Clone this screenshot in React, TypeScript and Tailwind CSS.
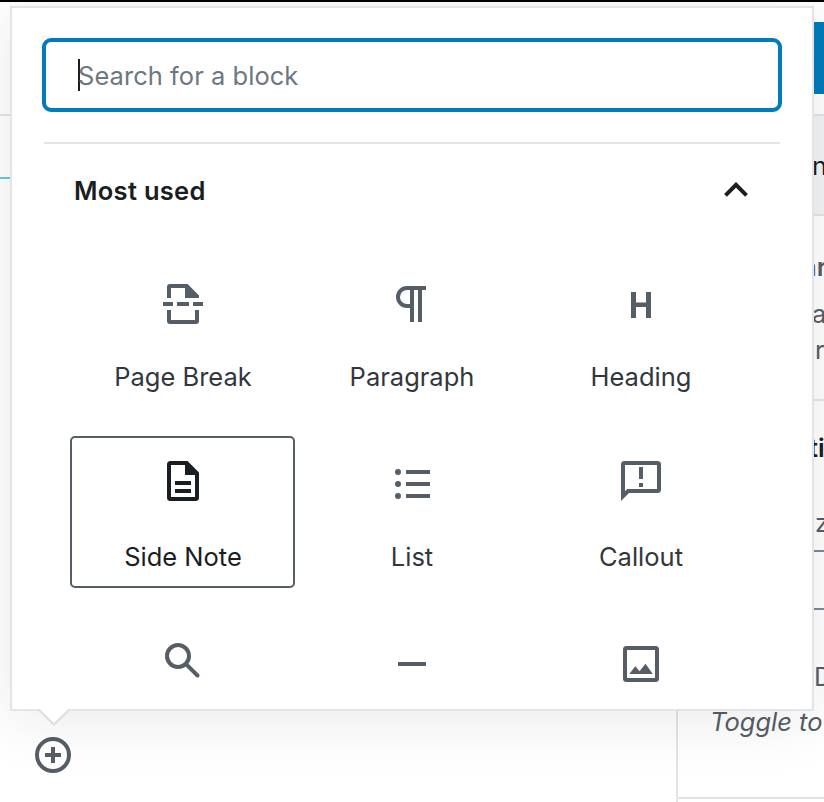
import type { ReactNode } from "react";

function Icon({ children }: { children: ReactNode }) {
  return (
    <svg width="48" height="48" viewBox="0 0 48 48" fill="currentColor" className="block shrink-0">
      {children}
    </svg>
  );
}

const PageBreakIcon = () => (
  <Icon>
    <path d="M8 18V7a3 3 0 0 1 3-3h17.6L40 15.500V18H26V8H12v10zM4 22h10v4H4zM18 22h12v4H18zM34 22h10v4H34zM8 30v11a3 3 0 0 0 3 3h26a3 3 0 0 0 3-3V30h-4v10H12V30z" />
  </Icon>
);

const ParagraphIcon = () => (
  <Icon>
    <path d="M19 6h19v4h-4v32h-4V10h-4v32h-4V28h-3a11 11 0 0 1 0-22zm3 4h-3a7 7 0 0 0 0 14h3z" fillRule="evenodd" />
  </Icon>
);

const HeadingIcon = () => (
  <Icon>
    <rect x="14" y="12" width="5" height="26" />
    <rect x="29" y="12" width="5" height="26" />
    <rect x="19" y="22.500" width="10" height="4.500" />
  </Icon>
);

const SideNoteIcon = () => (
  <Icon>
    <path
      fillRule="evenodd"
      d="M11.500 1H28.500L40 12.500V37.500A3.500 3.500 0 0 1 36.500 41H11.500A3.500 3.500 0 0 1 8 37.500V4.500A3.500 3.500 0 0 1 11.500 1zM12 5V37H36V15H26V5z"
    />
    <path d="M16 21h16v4H16zM16 29h16v4H16z" />
  </Icon>
);

const ListIcon = () => (
  <Icon>
    <circle cx="10" cy="12" r="3" />
    <circle cx="10" cy="24" r="3" />
    <circle cx="10" cy="36" r="3" />
    <path d="M18 10h24v4H18zM18 22h24v4H18zM18 34h24v4H18z" />
  </Icon>
);

const CalloutIcon = () => (
  <Icon>
    <path
      fillRule="evenodd"
      d="M7.500 1H40.500A3.500 3.500 0 0 1 44 4.500V29.500A3.500 3.500 0 0 1 40.500 33H12L4 41V4.500A3.500 3.500 0 0 1 7.500 1zM8 5V31.300L10.300 29H40V5z"
    />
    <path d="M22 7h4v12h-4zM22 23h4v4h-4z" />
  </Icon>
);

const SearchIcon = () => (
  <Icon>
    <g fill="none" stroke="currentColor" strokeWidth="4">
      <circle cx="19" cy="16" r="11" />
      <path d="M28.800 25.800L38.500 35.500" strokeLinecap="round" />
    </g>
  </Icon>
);

const SeparatorIcon = () => (
  <Icon>
    <rect x="10" y="22" width="28" height="4" />
  </Icon>
);

const ImageIcon = () => (
  <Icon>
    <rect x="8" y="8" width="32" height="32" rx="1.500" fill="none" stroke="currentColor" strokeWidth="4" />
    <path d="M12.300 34l6-7.700 4.200 5 6-7.500 7.300 10.200z" />
  </Icon>
);

const blocks = [
  { name: "Page Break", icon: PageBreakIcon },
  { name: "Paragraph", icon: ParagraphIcon },
  { name: "Heading", icon: HeadingIcon },
  { name: "Side Note", icon: SideNoteIcon, active: true },
  { name: "List", icon: ListIcon },
  { name: "Callout", icon: CalloutIcon },
  { name: "", icon: SearchIcon },
  { name: "", icon: SeparatorIcon },
  { name: "", icon: ImageIcon },
];

function Editor() {
  return (
    <div className="flex h-full flex-col">
      <header className="flex h-[116px] shrink-0 justify-end border-t-2 border-b-2 border-t-black border-b-[#e2e4e7] pt-5">
        <div className="h-[72px] w-10 bg-[#007cba]" />
      </header>
      <div className="flex min-h-0 flex-1">
        <main className="flex flex-1 flex-col pt-[61px]">
          <div className="h-0.5 bg-[#66c6e4]" />
          <button className="mt-[558px] ml-[35px] size-9 text-[#555d66]">
            <svg width="36" height="36" viewBox="0 0 36 36" fill="none" stroke="currentColor" strokeWidth="4">
              <circle cx="18" cy="18" r="16" />
              <path d="M10 18h16M18 10v16" />
            </svg>
          </button>
        </main>
        <aside className="w-[148px] overflow-hidden border-l-2 border-[#e2e4e7] whitespace-nowrap text-[#555d66]">
          <div className="h-[100px] border-b-2 border-[#e2e4e7] bg-[#f3f4f5] pt-8 pl-[134px] leading-9 text-[#191e23]">n</div>
          <div className="h-[185px] border-b-2 border-[#e2e4e7] pt-[33px] leading-9">
            <div className="pl-[124px] font-semibold">ar</div>
            <div className="mt-[11px] pl-[134px]">a</div>
            <div className="pl-[137px]">r</div>
          </div>
          <div className="h-[398px] border-b-2 border-[#e2e4e7] pt-[29px] leading-9">
            <div className="pl-[131px] font-semibold text-[#191e23]">ti</div>
            <div className="mt-[39px] flex h-[47px] border-b-2 border-[#7e8993] pl-[137px]">z</div>
            <div className="h-[58px] border-b-2 border-[#7e8993]" />
            <div className="mt-[49px] pl-[136px]">D</div>
            <div className="mt-[9px] pl-8 italic">Toggle to</div>
          </div>
        </aside>
      </div>
    </div>
  );
}

function Inserter() {
  return (
    <div className="absolute top-[6px] left-[10px] h-[705px] w-[804px] border-2 border-[#e2e4e7] bg-white shadow-[0_6px_60px_rgba(25,30,35,0.1)]">
      <div className="h-full overflow-hidden px-[30px] pt-[30px]">
        <div className="flex h-[74px] items-center rounded-[9px] border-4 border-[#007cba] pl-8">
          <span className="-mr-0.5 h-8 w-0.5 bg-[#191e23]" />
          <span className="pt-0.5 tracking-[0.04px] text-[#6c7781]">Search for a block</span>
        </div>
        <div className="mx-0.5 mt-[30px] h-0.5 bg-[#e2e4e7]" />
        <div className="flex h-[94px] items-center justify-between pr-[33px] pl-8 text-[#191e23]">
          <span className="tracking-[0.28px] font-semibold">Most used</span>
          <svg width="26" height="18" viewBox="0 0 26 18" fill="none" stroke="currentColor" strokeWidth="4">
            <path d="M2.500 13.300L13 2.800L23.500 13.300" />
          </svg>
        </div>
        <div className="ml-[26px] grid grid-cols-[230px_228px_230px] gap-y-7 pt-[18px]">
          {blocks.map(({ name, icon: BlockIcon, active }, index) => (
            <button
              key={index}
              className={
                active
                  ? "ml-0.5 flex h-[152px] w-[225px] flex-col items-center rounded-[5px] border-2 border-[#555d66] pt-[22px] pl-px text-[#191e23]"
                  : "flex h-[152px] flex-col items-center border-y-2 border-transparent pt-[22px] text-[#555d66]"
              }
            >
              <BlockIcon />
              <span className={active ? "mt-[31px] leading-9 text-[#191e23]" : "mt-[31px] leading-9 text-[#32373c]"}>
                {name}
              </span>
            </button>
          ))}
        </div>
      </div>
      <svg width="36" height="18" viewBox="0 0 36 18" className="absolute top-[701px] left-[24px]">
        <path d="M0 0H36L18 16.500L2 0z" fill="#fff" />
        <path d="M1.500 -0.500L18 15.500L34.500 -0.500" fill="none" stroke="#dcdee1" strokeWidth="2.200" />
      </svg>
    </div>
  );
}

export default function App() {
  return (
    <div className="relative h-[802px] w-[824px] overflow-hidden bg-white font-['Inter','Liberation_Sans',sans-serif] text-[25.5px]">
      <Editor />
      <Inserter />
    </div>
  );
}
